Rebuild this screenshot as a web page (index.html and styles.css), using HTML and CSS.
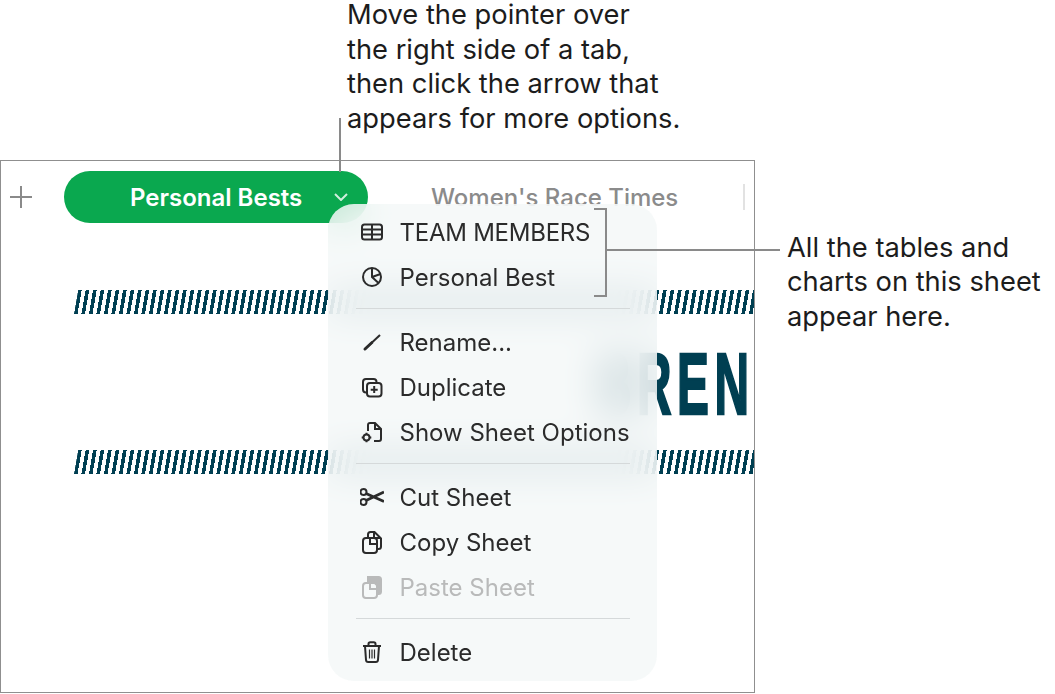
FILE: index.html
```html
<!DOCTYPE html>
<html lang="en">
<head>
    <meta charset="UTF-8">
    <meta name="viewport" content="width=device-width, initial-scale=1.0">
    <title>Sheet tab menu</title>
    <link rel="stylesheet" href="styles.css">
</head>
<body>
    <div class="figure">
        <!-- Callout above the tab -->
        <p class="callout callout-top">
            <span>Move the pointer over</span>
            <span>the right side of a tab,</span>
            <span>then click the arrow that</span>
            <span>appears for more options.</span>
        </p>

        <div class="window">
            <div class="tabs">
                <svg class="add" viewBox="0 0 22 22"><path d="M11 0v22M0 11h22"/></svg>
                <div class="tab-active">
                    <span>Personal Bests</span>
                    <svg class="chevron" viewBox="0 0 14 8"><path d="M1 1l6 6 6-6"/></svg>
                </div>
                <div class="tab">Women's Race Times</div>
                <div class="tab-sep"></div>
            </div>

            <div class="stripes"></div>
            <div class="title"><span>BREN</span></div>
            <div class="stripes"></div>

            <!-- Tab menu -->
            <div class="menu">
                <div class="item caps">
                    <svg viewBox="0 0 24 24"><rect x="2" y="4.500" width="20" height="15" rx="2.500"/><path d="M2 9.500h20M2 14.500h20M12 5v14"/></svg>
                    TEAM MEMBERS
                </div>
                <div class="item">
                    <svg viewBox="0 0 24 24"><circle cx="12" cy="12" r="9"/><path d="M12 3v9l6.500 6M12 12l8.500-3"/></svg>
                    Personal Best
                </div>
                <div class="sep"></div>
                <div class="item">
                    <svg viewBox="0 0 24 24"><path d="M4 20L20 5"/><path class="thick" d="M4.500 19.500l8-7.500"/></svg>
                    Rename...
                </div>
                <div class="item">
                    <svg viewBox="0 0 24 24"><path d="M6 17.500c-2 0-3-1-3-3V7c0-2 1-3 3-3h7.500c2 0 3 1 3 3"/><rect x="7" y="8" width="14.500" height="13.500" rx="3"/><path d="M14.200 11v7M10.700 14.700h7"/></svg>
                    Duplicate
                </div>
                <div class="item">
                    <svg viewBox="0 0 24 24"><path d="M8 11V5c0-1.300.7-2 2-2h5l6 6v10c0 1.300-.7 2-2 2h-5M15 3v6h6"/><circle cx="6.500" cy="17.500" r="3"/><path d="M6.500 12.700v1.800M6.500 20.500v1.800M1.700 17.500h1.800M9.500 17.500h1.800"/></svg>
                    Show Sheet Options
                </div>
                <div class="sep"></div>
                <div class="item">
                    <svg viewBox="0 0 24 24"><circle cx="3.500" cy="7" r="3"/><circle cx="3.500" cy="17" r="3"/><path class="thick" d="M6 8.500L24 16.500M6 15.500L24 7"/></svg>
                    Cut Sheet
                </div>
                <div class="item">
                    <svg viewBox="0 0 24 24"><path d="M8 7V4.500C8 3 9 2 10.500 2h4L21 8.500v8c0 1.500-1 2.500-2.500 2.500H17"/><path d="M14 2.500V8h6.500"/><rect x="3" y="8" width="14" height="15" rx="3"/><path d="M10 8v6h7"/></svg>
                    Copy Sheet
                </div>
                <div class="item disabled">
                    <svg viewBox="0 0 24 24"><path class="filled" d="M8 2h10.500c1.500 0 2.500 1 2.500 2.500v12c0 1.500-1 2.500-2.500 2.500H17V10l-3-3H8z"/><rect x="3" y="8" width="14" height="15" rx="3"/><path d="M10 8v6h7"/></svg>
                    Paste Sheet
                </div>
                <div class="sep"></div>
                <div class="item">
                    <svg viewBox="0 0 24 24"><path d="M3 6h18M8.500 6V4c0-1 .7-1.700 1.700-1.700h3.600c1 0 1.700.7 1.700 1.700v2M5 6l1 14c.1 1.300 1 2 2.200 2h7.600c1.200 0 2.100-.7 2.200-2l1-14"/><path class="thin" d="M9.500 9.500v9M12 9.500v9M14.500 9.500v9"/></svg>
                    Delete
                </div>
            </div>
        </div>

        <!-- Leader lines -->
        <div class="leader-tab"></div>
        <div class="bracket"></div>
        <div class="leader-bracket"></div>

        <p class="callout callout-right">
            <span>All the tables and</span>
            <span>charts on this sheet</span>
            <span>appear here.</span>
        </p>
    </div>
</body>
</html>
```

FILE: styles.css
```css
* {
    box-sizing: border-box;
}
body {
    margin: 0;
    background-color: #fff;
    font-family: Inter, "Noto Sans", sans-serif;
}
.figure {
    position: relative;
    width: 1055px;
    height: 694px;
    overflow: hidden;
}
.callout {
    display: flex;
    flex-direction: column;
    gap: 4.700px;
    margin: 0;
    font-size: 27.300px;
    line-height: 30px;
    color: #1c1c1c;
    white-space: nowrap;
}
.callout-top {
    height: 160px;
    padding-left: 347px;
}
.callout-right {
    position: absolute;
    left: 787px;
    top: 232.500px;
}

.window {
    position: relative;
    width: 755px;
    height: 533px;
    border: 1.500px solid #8f8f8f;
    overflow: hidden;
}
.tabs {
    display: flex;
    align-items: center;
    height: 62px;
    padding-top: 10px;
}
.add {
    width: 22px;
    height: 22px;
    margin-left: 9px;
    margin-right: 32px;
    flex: none;
}
.add path {
    fill: none;
    stroke: #8a8a8a;
    stroke-width: 2;
}
.tab-active {
    display: flex;
    align-items: center;
    flex: none;
    width: 304px;
    height: 52px;
    padding-left: 66px;
    border-radius: 26px;
    background-color: #0aa84f;
    color: #fff;
    font-size: 24px;
    font-weight: 600;
}
.chevron {
    width: 14px;
    height: 8px;
    margin-left: 32px;
}
.chevron path {
    fill: none;
    stroke: #cfeedd;
    stroke-width: 2;
}
.tab {
    margin-left: 63px;
    width: 312px;
    flex: none;
    padding-top: 1px;
    color: #8b8b8b;
    font-size: 24px;
    font-weight: 500;
    white-space: nowrap;
}
.tab-sep {
    flex: none;
    width: 2px;
    height: 26px;
    background-color: #e2e2e2;
}

.stripes {
    height: 24px;
    margin-left: 75px;
    margin-right: -10px;
    transform: skewX(-10deg);
    background-image: repeating-linear-gradient(90deg, #003f52 0, #003f52 3.600px, transparent 3.600px, transparent 7.500px);
}
.stripes:nth-of-type(2) {
    margin-top: 67px;
}
.title {
    display: flex;
    justify-content: flex-end;
    height: 136px;
    padding-top: 27px;
}
.title span {
    display: block;
    font-family: "Liberation Sans", sans-serif;
    font-size: 87px;
    line-height: 85px;
    font-weight: 700;
    letter-spacing: 10px;
    margin-right: -1px;
    color: #003f52;
    -webkit-text-stroke: 2.500px #003f52;
    transform: scaleX(0.55);
    transform-origin: right center;
}

.menu {
    position: absolute;
    left: 326.500px;
    top: 42.500px;
    width: 329px;
    height: 477px;
    padding: 5.500px 0 6px;
    border-radius: 26px;
    background-color: rgba(244, 248, 248, 0.82);
    -webkit-backdrop-filter: blur(18px);
    backdrop-filter: blur(18px);
}
.item {
    display: flex;
    align-items: center;
    gap: 16px;
    height: 45px;
    padding-left: 32px;
    padding-top: 1px;
    color: #2b2b2b;
    font-size: 24px;
    white-space: nowrap;
}
.item.caps {
    letter-spacing: -0.250px;
}
.item svg {
    flex: none;
    width: 24px;
    height: 24px;
    fill: none;
    stroke: #2b2b2b;
    stroke-width: 2;
}
.item .thick {
    stroke-width: 2.800;
}
.item .thin {
    stroke-width: 1.200;
}
.item.disabled {
    color: #b9baba;
}
.item.disabled svg {
    stroke: #b9baba;
}
.item .filled {
    fill: #b9baba;
}
.sep {
    height: 1.500px;
    margin: 8.500px 27px 10px 28px;
    background-color: #d5d9da;
}

.leader-tab {
    position: absolute;
    left: 338.500px;
    top: 118px;
    width: 2px;
    height: 54px;
    background-color: #8a8a8a;
}
.bracket {
    position: absolute;
    left: 594px;
    top: 208px;
    width: 13px;
    height: 89px;
    border: 2px solid #8a8a8a;
    border-left: 0;
}
.leader-bracket {
    position: absolute;
    left: 606px;
    top: 248.500px;
    width: 174px;
    height: 2px;
    background-color: #8a8a8a;
}
```
